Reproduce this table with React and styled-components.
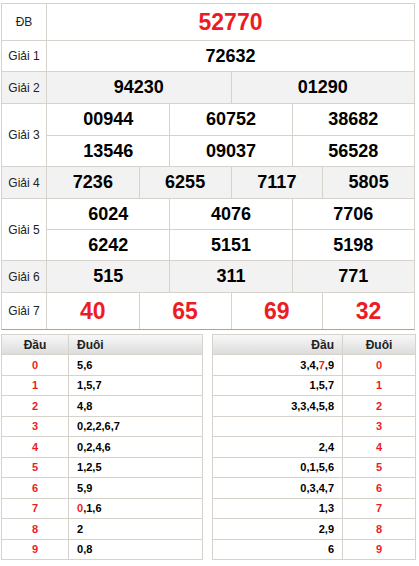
import React from "react";
import styled, { createGlobalStyle } from "styled-components";

const Global = createGlobalStyle`
  html, body { margin: 0; padding: 0; background: #fff; }
  body { font-family: "Liberation Sans", Arial, sans-serif; color: #000; }
  * { box-sizing: border-box; }
`;

const BORDER = "#d7d2cc";
const RED = "#ed1c24";

const Page = styled.div`
  width: 419px;
  padding: 3px 0 0 1px;
`;

const Board = styled.div`
  width: 414px;
  border: 1px solid ${BORDER};
  border-bottom: 1px solid #f7941d;
`;

const Row = styled.div`
  display: flex;
  background: ${(p) => (p.$alt ? "#f2f2f2" : "#fff")};
  & + & { border-top: 1px solid ${BORDER}; }
`;

const Label = styled.div`
  width: 45px;
  flex: none;
  border-right: 1px solid ${BORDER};
  display: flex;
  align-items: center;
  justify-content: center;
  font-size: 12px;
  color: #222;
`;

const Cells = styled.div`
  flex: 1;
  display: flex;
  flex-direction: column;
`;

const Line = styled.div`
  display: grid;
  grid-template-columns: repeat(${(p) => p.$cols}, 1fr);
  height: ${(p) => p.$h}px;
  & + & { border-top: 1px solid ${BORDER}; }
`;

const Num = styled.div`
  display: flex;
  align-items: center;
  justify-content: center;
  font-weight: bold;
  font-size: ${(p) => (p.$big ? 23 : 18)}px;
  color: ${(p) => (p.$red ? RED : "#000")};
  & + & { border-left: 1px solid ${BORDER}; }
`;

const Lower = styled.div`
  width: 415px;
  margin-top: 4px;
  display: flex;
  justify-content: space-between;
`;

const Table = styled.div`
  width: ${(p) => p.$w}px;
  border: 1px solid ${BORDER};
`;

const TRow = styled.div`
  display: grid;
  grid-template-columns: ${(p) => p.$cols};
  height: ${(p) => (p.$head ? "19px" : "20.5px")};
  background: ${(p) => (p.$head ? "linear-gradient(#f8f8f8, #dcdcdc)" : "#fff")};
  border-top: ${(p) => (p.$head ? "none" : `1px solid ${BORDER}`)};
`;

const TCell = styled.div`
  display: flex;
  align-items: center;
  justify-content: ${(p) => p.$align};
  padding: ${(p) => (p.$align === "flex-start" ? "0 0 0 8px" : p.$align === "flex-end" ? "0 8px 0 0" : "0")};
  font-weight: bold;
  font-size: ${(p) => (p.$head ? 12 : 11)}px;
  color: ${(p) => (p.$red ? RED : p.$head ? "#222" : "#000")};
  & + & { border-left: 1px solid ${BORDER}; }
`;

const Hi = styled.span`
  color: ${RED};
`;

const prizes = [
  { label: "ĐB", lines: [{ h: 36, nums: ["52770"], big: true, red: true }] },
  { label: "Giải 1", lines: [{ h: 30, nums: ["72632"] }] },
  { label: "Giải 2", alt: true, lines: [{ h: 31, nums: ["94230", "01290"] }] },
  {
    label: "Giải 3",
    lines: [
      { h: 31, nums: ["00944", "60752", "38682"] },
      { h: 31, nums: ["13546", "09037", "56528"] },
    ],
  },
  { label: "Giải 4", alt: true, lines: [{ h: 31, nums: ["7236", "6255", "7117", "5805"] }] },
  {
    label: "Giải 5",
    lines: [
      { h: 30, nums: ["6024", "4076", "7706"] },
      { h: 31, nums: ["6242", "5151", "5198"] },
    ],
  },
  { label: "Giải 6", alt: true, lines: [{ h: 31, nums: ["515", "311", "771"] }] },
  { label: "Giải 7", lines: [{ h: 36, nums: ["40", "65", "69", "32"], big: true, red: true }] },
];

// [digits, highlighted index]
const dau = [
  [["5", "6"]],
  [["1", "5", "7"]],
  [["4", "8"]],
  [["0", "2", "2", "6", "7"]],
  [["0", "2", "4", "6"]],
  [["1", "2", "5"]],
  [["5", "9"]],
  [["0", "1", "6"], 0],
  [["2"]],
  [["0", "8"]],
];

const duoi = [
  [["3", "4", "7", "9"], 2],
  [["1", "5", "7"]],
  [["3", "3", "4", "5", "8"]],
  [[]],
  [["2", "4"]],
  [["0", "1", "5", "6"]],
  [["0", "3", "4", "7"]],
  [["1", "3"]],
  [["2", "9"]],
  [["6"]],
];

function Digits({ list, hi }) {
  return (
    <span>
      {list.map((d, i) => (
        <React.Fragment key={i}>
          {i > 0 && ","}
          {i === hi ? <Hi>{d}</Hi> : d}
        </React.Fragment>
      ))}
    </span>
  );
}

export default function App() {
  return (
    <Page>
      <Global />
      <Board>
        {prizes.map((p) => (
          <Row key={p.label} $alt={p.alt}>
            <Label>{p.label}</Label>
            <Cells>
              {p.lines.map((l, i) => (
                <Line key={i} $cols={l.nums.length} $h={l.h}>
                  {l.nums.map((n, j) => (
                    <Num key={j} $big={l.big} $red={l.red}>
                      {n}
                    </Num>
                  ))}
                </Line>
              ))}
            </Cells>
          </Row>
        ))}
      </Board>
      <Lower>
        <Table $w={202}>
          <TRow $head $cols="66px 1fr">
            <TCell $head $align="center">Đầu</TCell>
            <TCell $head $align="flex-start">Đuôi</TCell>
          </TRow>
          {dau.map(([list, hi], i) => (
            <TRow key={i} $cols="66px 1fr">
              <TCell $align="center" $red>{i}</TCell>
              <TCell $align="flex-start">
                <Digits list={list} hi={hi} />
              </TCell>
            </TRow>
          ))}
        </Table>
        <Table $w={204}>
          <TRow $head $cols="129px 1fr">
            <TCell $head $align="flex-end">Đầu</TCell>
            <TCell $head $align="center">Đuôi</TCell>
          </TRow>
          {duoi.map(([list, hi], i) => (
            <TRow key={i} $cols="129px 1fr">
              <TCell $align="flex-end">
                <Digits list={list} hi={hi} />
              </TCell>
              <TCell $align="center" $red>{i}</TCell>
            </TRow>
          ))}
        </Table>
      </Lower>
    </Page>
  );
}
